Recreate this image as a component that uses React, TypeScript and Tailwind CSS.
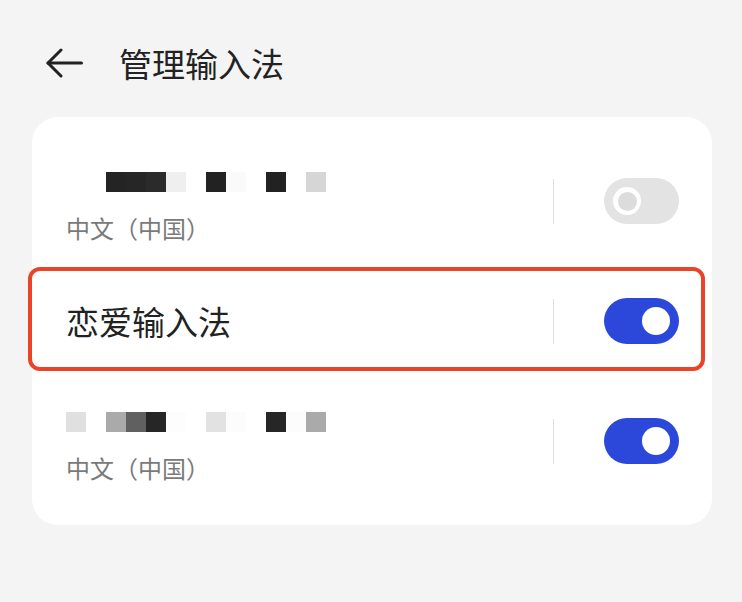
import React from "react";

const row1 = ["#fff", "#fff", "#242424", "#262626", "#2b2b2b", "#efefef", "#fff", "#222222", "#fafafa", "#fff", "#222222", "#fff", "#d6d6d6"];
const row3 = ["#e0e0e0", "#fff", "#aaaaaa", "#606060", "#262626", "#fdfdfd", "#fff", "#e2e2e2", "#fcfcfc", "#fff", "#262626", "#fcfcfc", "#aaaaaa"];

function Blocks({ colors }: { colors: string[] }) {
  return (
    <div className="flex h-[20px]">
      {colors.map((c, i) => (
        <div key={i} className="w-[20px] h-[20px]" style={{ backgroundColor: c }} />
      ))}
    </div>
  );
}

function Toggle({ on }: { on: boolean }) {
  if (on) {
    return (
      <div className="w-[75px] h-[46px] rounded-full bg-[#2b48da] flex items-center justify-end pr-[9px]">
        <div className="w-[28px] h-[28px] rounded-full bg-white" />
      </div>
    );
  }
  return (
    <div className="w-[75px] h-[46px] rounded-full bg-[#e3e3e3] flex items-center pl-[9px]">
      <div className="w-[28px] h-[28px] rounded-full bg-white flex items-center justify-center">
        <div className="w-[19px] h-[19px] rounded-full bg-[#dcdcdc]" />
      </div>
    </div>
  );
}

function Right({ on }: { on: boolean }) {
  return (
    <div className="flex items-center">
      <div className="w-px h-[45px] bg-[#dedede] mr-[50px]" />
      <Toggle on={on} />
    </div>
  );
}

export default function App() {
  const font = { fontFamily: '"Noto Sans CJK SC", "Noto Sans", sans-serif' };
  return (
    <div className="w-[742px] h-[602px] bg-[#f4f4f4] overflow-hidden" style={font}>
      <div className="flex items-center h-[66px] mt-[30px] pl-[46px]">
        <svg width="37" height="30" viewBox="0 0 37 30" fill="none" stroke="#222" strokeWidth="3" strokeLinecap="round" strokeLinejoin="round">
          <path d="M35.5 15H2" />
          <path d="M15 2L2 15L15 28" />
        </svg>
        <div className="ml-[36px] text-[33px] leading-none text-[#222]">管理输入法</div>
      </div>
      <div className="relative mt-[21px] ml-[32px] w-[680px] h-[408px] rounded-[26px] bg-white py-[24px] pl-[34px] pr-[33px]">
        <div className="h-[120px] flex items-center justify-between">
          <div className="flex flex-col pt-[14px]">
            <Blocks colors={row1} />
            <div className="mt-[20px] text-[24px] leading-[32px] text-[#7a7a7a]">中文（中国）</div>
          </div>
          <Right on={false} />
        </div>
        <div className="h-[120px] flex items-center justify-between">
          <div className="text-[33px] leading-[40px] text-[#222]">恋爱输入法</div>
          <Right on={true} />
        </div>
        <div className="h-[120px] flex items-center justify-between">
          <div className="flex flex-col pt-[14px]">
            <Blocks colors={row3} />
            <div className="mt-[20px] text-[24px] leading-[32px] text-[#7a7a7a]">中文（中国）</div>
          </div>
          <Right on={true} />
        </div>
        <div className="absolute left-[-4px] top-[150px] w-[677px] h-[104px] border-[4px] border-[#ea4328] rounded-[12px]" />
      </div>
    </div>
  );
}
